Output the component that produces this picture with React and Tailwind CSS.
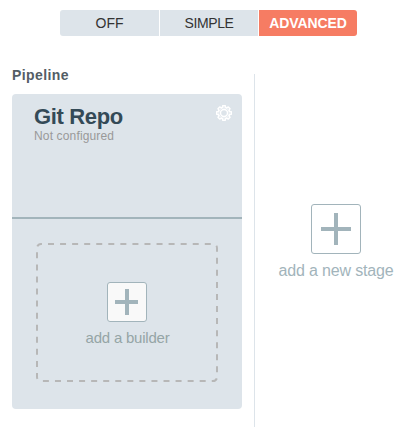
function Plus({ className, width, height, h, v }) {
  return (
    <svg className={className} width={width} height={height} fill="#a2b4bb" shapeRendering="crispEdges">
      <rect {...h} />
      <rect {...v} />
    </svg>
  );
}

function GearIcon() {
  return (
    <svg width="16" height="16" viewBox="0 0 16 16" fill="none" stroke="#fff" className="block">
      <path
        d="M6.8.7h2.4l.4 1.7 1.2.5 1.5-.9 1.7 1.7-.9 1.5.5 1.2 1.7.4v2.4l-1.7.4-.5 1.2.9 1.5-1.7 1.7-1.5-.9-1.2.5-.4 1.7H6.800l-.4-1.7-1.2-.5-1.500.9L2 12.300l.9-1.500-.5-1.200-1.700-.4V6.800l1.700-.4.500-1.200L2 3.700 3.700 2l1.500.9 1.200-.5z"
        strokeWidth="1.5"
        strokeLinejoin="round"
      />
      <circle cx="8" cy="8" r="3.5" strokeWidth="1.4" />
      <circle cx="8" cy="8" r="5.2" strokeWidth="0.6" />
    </svg>
  );
}

function ModeSwitch() {
  return (
    <div className="ml-[60px] flex h-[26px] w-[297px] gap-px overflow-hidden rounded-[3px] text-[14px] leading-[26px] text-[#333]">
      <button className="w-[99px] bg-[#dde4ea]">OFF</button>
      <button className="w-[98px] bg-[#dde4ea] tracking-[-0.4px]">SIMPLE</button>
      <button className="w-[98px] bg-[#f67c63] font-bold tracking-[-0.1px] text-white">ADVANCED</button>
    </div>
  );
}

function StageCard() {
  return (
    <div className="flex h-[315px] w-[230px] flex-col rounded-[4px] bg-[#dde4ea]">
      <div className="flex h-[125px] justify-between border-b-2 border-[#a2b4bb] pr-[10px] pl-[22px]">
        <div className="pt-[10px]">
          <h2 className="text-[22px] leading-[26px] font-bold tracking-[-0.35px] whitespace-nowrap text-[#344a57]">Git Repo</h2>
          <p className="text-[12px] leading-[12px] tracking-[0.15px] text-[#999]">Not configured</p>
        </div>
        <button className="mt-[11px] h-4 w-4"><GearIcon /></button>
      </div>
      <div className="relative mt-6 ml-6 flex h-[139px] w-[182px] flex-col items-center pt-[39px]">
        <svg className="absolute inset-0" width="182" height="139" fill="none">
          <rect x="1" y="1" width="180" height="137" rx="4" stroke="#b7b7b7" strokeWidth="2" strokeDasharray="6 6.06" strokeDashoffset="-7" />
        </svg>
        <button className="h-10 w-10 rounded-[3px] border border-[#a2b4bb] bg-[#f9f9f9]">
          <Plus className="block" width={38} height={38} h={{ x: 7, y: 17, width: 23, height: 4 }} v={{ x: 17, y: 6, width: 4, height: 26 }} />
        </button>
        <span className="mt-[7px] pl-px text-[15px] leading-[17px] tracking-[-0.22px] whitespace-nowrap text-[#95a5a6]">add a builder</span>
      </div>
    </div>
  );
}

export default function App() {
  return (
    <main className='h-[427px] w-[411px] overflow-hidden bg-white pt-[10px] font-["Liberation_Sans",Arial,sans-serif]'>
      <ModeSwitch />
      <div className="mt-[30px] flex pl-3">
        <section className="w-[230px]">
          <h1 className="h-7 text-[14px] leading-[18px] font-bold tracking-[0.4px] text-[#535d65]">Pipeline</h1>
          <StageCard />
        </section>
        <div className="mt-2 ml-3 h-[353px] w-px bg-[#dde4ea]" />
        <aside className="flex w-[162px] flex-col items-center pt-[138px] pl-[6px]">
          <button className="h-[50px] w-[50px] rounded-[3px] border border-[#a2b4bb] bg-white">
            <Plus className="block" width={48} height={48} h={{ x: 9, y: 22, width: 30, height: 4 }} v={{ x: 22, y: 8, width: 4, height: 32 }} />
          </button>
          <span className="mt-[7px] text-[16px] leading-[19px] tracking-[-0.16px] whitespace-nowrap text-[#a2b4bb]">add a new stage</span>
        </aside>
      </div>
    </main>
  );
}
